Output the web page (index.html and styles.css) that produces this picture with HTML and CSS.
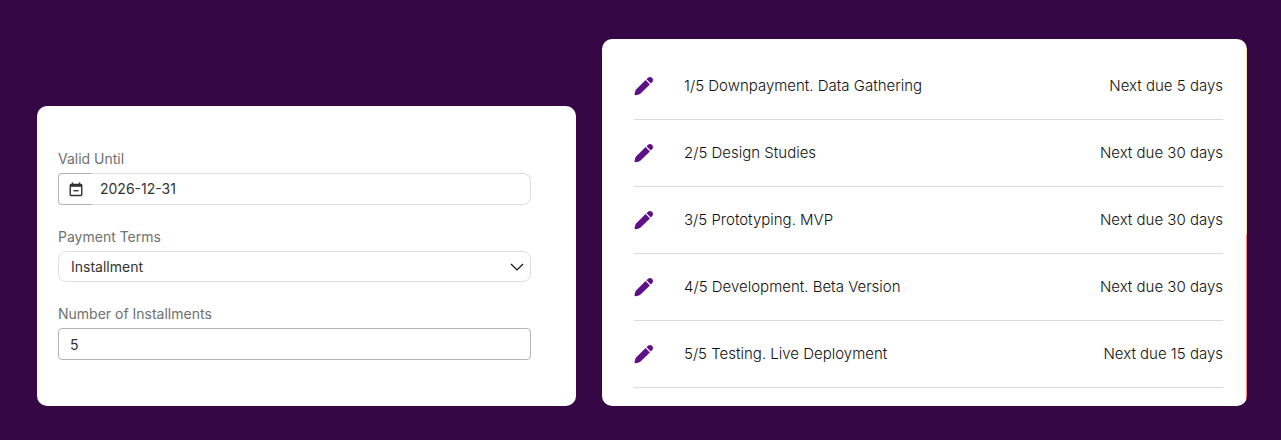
FILE: index.html
```html
<!DOCTYPE html>
<html lang="en">
<head>
<meta charset="utf-8">
<meta name="viewport" content="width=device-width, initial-scale=1">
<title>Payment Terms</title>
<link rel="stylesheet" href="styles.css">
</head>
<body>
<svg class="sprite" aria-hidden="true">
  <symbol id="pencil" viewBox="0 0 20 20">
    <path d="M.5 18.500Q.5 15 2.300 13.200L11.600 4.100 15.900 8.400 6.800 17.300Q4.600 19.300 1.200 19.300Q.5 19.300 .5 18.500Z"/>
    <path d="M12.500 3.300 14.300 1.600Q16 .3 17.700 1.600L18.400 2.300Q19.900 4.100 18.500 5.800L16.800 7.600Z"/>
  </symbol>
</svg>
<main class="page">
  <form class="card form">
    <div class="field">
      <label class="label" for="valid">Valid Until</label>
      <div class="date">
        <button class="date-button" type="button" aria-label="Choose date">
          <svg class="calendar" viewBox="0 0 14 15" aria-hidden="true">
            <path d="M3.500 .5V3M10.500 .5V3" stroke-width="1.500"/>
            <rect x="1.250" y="2.500" width="11.500" height="11" rx="1" stroke-width="1.400"/>
            <path d="M1 3.700H13" stroke-width="2.200"/>
            <path d="M4.500 8.700H9.500" stroke-width="1.400"/>
          </svg>
        </button>
        <input class="date-input" id="valid" type="text" value="2026-12-31">
      </div>
    </div>
    <div class="field">
      <label class="label" for="terms">Payment Terms</label>
      <div class="select-wrap">
        <select class="select" id="terms"><option>Installment</option></select>
        <svg class="chevron" viewBox="0 0 14 8" aria-hidden="true"><path d="M1 1 7 7 13 1"/></svg>
      </div>
    </div>
    <div class="field">
      <label class="label" for="count">Number of Installments</label>
      <input class="number" id="count" type="text" inputmode="numeric" value="5">
    </div>
  </form>
  <section class="card schedule">
    <ul class="rows">
      <li class="row"><button class="edit" type="button" aria-label="Edit 1/5"><svg class="pencil"><use href="#pencil"/></svg></button><span class="name">1/5 Downpayment. Data Gathering</span><span>Next due 5 days</span></li>
      <li class="row"><button class="edit" type="button" aria-label="Edit 2/5"><svg class="pencil"><use href="#pencil"/></svg></button><span class="name">2/5 Design Studies</span><span>Next due 30 days</span></li>
      <li class="row"><button class="edit" type="button" aria-label="Edit 3/5"><svg class="pencil"><use href="#pencil"/></svg></button><span class="name">3/5 Prototyping. MVP</span><span>Next due 30 days</span></li>
      <li class="row"><button class="edit" type="button" aria-label="Edit 4/5"><svg class="pencil"><use href="#pencil"/></svg></button><span class="name">4/5 Development. Beta Version</span><span>Next due 30 days</span></li>
      <li class="row"><button class="edit" type="button" aria-label="Edit 5/5"><svg class="pencil"><use href="#pencil"/></svg></button><span class="name">5/5 Testing. Live Deployment</span><span>Next due 15 days</span></li>
    </ul>
  </section>
</main>
</body>
</html>
```
FILE: styles.css
```css
* { box-sizing: border-box; }
body {
  margin: 0;
  background: #350845;
  color: #111;
  font: 300 15px/18px Inter, "Liberation Sans", sans-serif;
}
button, input, select { font: inherit; color: inherit; margin: 0; }
.sprite { display: none; }
.page {
  display: grid;
  grid-template-columns: 539fr 645fr;
  gap: 26px;
  align-items: end;
  padding: 39px 34px 34px 37px;
}
.card { background: #fff; border-radius: 10px; }
.form {
  display: flex;
  flex-direction: column;
  gap: 23px;
  padding: 44px 45px 46px 21px;
  font-weight: 400;
  font-size: 14px;
}
.field { display: flex; flex-direction: column; gap: 5px; }
.label { color: #707070; }
.date { display: flex; height: 32px; }
.date-button {
  display: flex;
  align-items: center;
  justify-content: center;
  width: 34px;
  padding: 0;
  background: none;
  border: 1px solid #b5b5b5;
  border-right: 0;
  border-radius: 4px 0 0 4px;
}
.calendar { width: 14px; height: 15px; fill: none; stroke: #333; }
.date-input {
  flex: 1;
  min-width: 0;
  padding: 0 8px;
  background: none;
  border: 1px solid #dedede;
  border-left: 0;
  border-radius: 0 8px 8px 0;
  color: #333;
}
.select-wrap { display: grid; align-items: center; }
.select {
  grid-area: 1 / 1;
  appearance: none;
  width: 100%;
  height: 31px;
  padding: 0 36px 0 12px;
  background: none;
  border: 1px solid #dedede;
  border-radius: 8px;
  color: #333;
}
.chevron {
  grid-area: 1 / 1;
  justify-self: end;
  width: 14px;
  height: 8px;
  margin-right: 7px;
  fill: none;
  stroke: #111;
  stroke-width: 1.2;
  pointer-events: none;
}
.number {
  width: 100%;
  height: 32px;
  padding: 0 11px;
  background: none;
  border: 1px solid #b5b5b5;
  border-radius: 4px;
  color: #333;
}
.schedule {
  padding: 14px 24px 18px 32px;
  background: linear-gradient(#f8e3a0 53%, #ff8a80 53%) right / 1px 100% no-repeat #fff;
}
.rows { margin: 0; padding: 0; list-style: none; }
.row {
  display: flex;
  align-items: center;
  height: 67px;
  border-bottom: 1px solid #d9d9d9;
}
.edit { display: flex; margin-right: 30px; padding: 0; background: none; border: 0; }
.pencil { width: 20px; height: 20px; fill: #5f1087; }
.name { flex: 1; }
```
